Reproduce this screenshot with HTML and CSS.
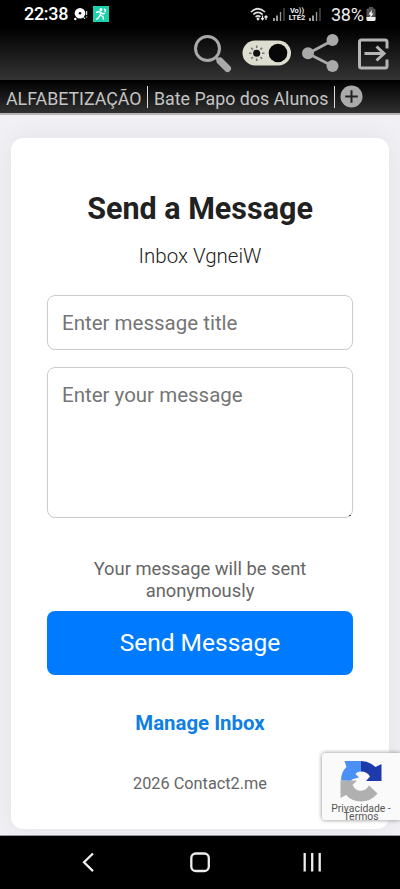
FILE: index.html
```html
<!DOCTYPE html>
<html lang="pt">
<head>
<meta charset="utf-8">
<meta name="viewport" content="width=device-width, initial-scale=1">
<title>Send a Message</title>
<link rel="stylesheet" href="styles.css">
</head>
<body>
<div class="status">
  <span class="clock">22:38</span>
  <svg class="disc" width="14" height="14" viewBox="0 0 14 14"><circle cx="6" cy="6.2" r="5.3" fill="#fff"/><circle cx="6" cy="6.2" r="1.3" fill="#111"/><circle cx="1.3" cy="12" r="1.2" fill="#fff"/><path d="M9.5 10l1.5 2M12.7 4v4M12.7 9.5v1" stroke="#fff" stroke-width="1"/></svg>
  <svg class="run" width="16" height="16" viewBox="0 0 16 16"><path d="M0 0h16v16H0z" fill="#1cd0ab"/><circle cx="8" cy="3.600" r="1.500" fill="#fff"/><path d="M3 6.500l3-1 2 1L7 9l3 1.700.500 3M7 9l-1.700 3L3 13.300M8 6.500l2 1.500 2-.8M11 3q2 1 1 3" fill="none" stroke="#fff" stroke-width="1.400"/></svg>
  <svg class="wifi" width="19" height="15" viewBox="0 0 19 15"><path d="M1 5Q8 -1.500 15 5M3.400 7.500Q8 3.300 12.600 7.500M5.600 9.800Q8 7.800 10.400 9.800" fill="none" stroke="#ddd" stroke-width="1.700"/><circle cx="8" cy="12" r="1.400" fill="#ddd"/><path d="M12.500 8.500v4M11.200 11.200l1.300 1.600 1.300-1.600M16 13V9M14.500 10.500l1.500-1.700 1.500 1.700" fill="none" stroke="#eee" stroke-width="1.200"/></svg>
  <svg class="signal" width="12" height="13" viewBox="0 0 12 13"><path d="M1 10v3M4 7.500v5.500" stroke="#eee" stroke-width="1.3"/><path d="M7.500 4v9" stroke="#999" stroke-width="1.300"/><path d="M11 0v13" stroke="#555" stroke-width="1.300"/></svg>
  <span class="lte"><span>Vo))</span><span>LTE2</span></span>
  <svg class="signal signal2" width="12" height="13" viewBox="0 0 12 13"><path d="M1 10v3M4 7.500v5.500" stroke="#eee" stroke-width="1.3"/><path d="M7.500 4v9" stroke="#999" stroke-width="1.300"/><path d="M11 0v13" stroke="#555" stroke-width="1.300"/></svg>
  <span class="pct">38%</span>
  <svg class="battery" width="10" height="14" viewBox="0 0 10 14"><path d="M3 0h4v1.500h1.500l1 1V13l-1 1h-7l-1-1V2.500l1-1H3z" fill="#555"/><path d="M.5 10h9v3l-1 1h-7l-1-1z" fill="#eee"/><path d="M6 3L2.500 7.500h2L4 11l3.500-4.500h-2z" fill="#fff"/></svg>
</div>
<div class="toolbar">
  <svg width="220" height="52" viewBox="180 28 220 52">
    <circle cx="207.500" cy="48.500" r="12" fill="none" stroke="#a9a9a9" stroke-width="3"/>
    <path d="M216 57.500l4 4" stroke="#a9a9a9" stroke-width="3"/><path d="M220 61l7.500 7.500" stroke="#a9a9a9" stroke-width="7" stroke-linecap="round"/>
    <rect x="242.500" y="40.500" width="48.500" height="25" rx="12.500" fill="#deded0"/><circle cx="278" cy="53" r="9.300" fill="#060606"/>
    <circle cx="256.700" cy="53.300" r="3.500" fill="#111"/><path d="M256.700 45.500v2.500M256.700 58.500v2.500M249 53.300h2.500M262 53.300h2.500M251.200 47.800l1.800 1.800M260.400 57l1.800 1.800M262.200 47.800l-1.800 1.800M253 57l-1.800 1.800" stroke="#777" stroke-width="1.600"/>
    <path d="M332.500 40.500L308 53.500l24.500 12.500" fill="none" stroke="#a9a9a9" stroke-width="2.800"/><circle cx="332.500" cy="40" r="6" fill="#a9a9a9"/><circle cx="308" cy="53.300" r="6" fill="#a9a9a9"/><circle cx="332.500" cy="66" r="6" fill="#a9a9a9"/>
    <path d="M387 48.500v-6.500a2 2 0 0 0-2-2h-23.500a2 2 0 0 0-2 2v24a2 2 0 0 0 2 2H385a2 2 0 0 0 2-2v-6.500M364.500 53.500h19M376.500 46.500l7.500 7-7.500 7" fill="none" stroke="#b5b5b5" stroke-width="3"/>
  </svg>
</div>
<div class="tabs">
  <span class="tab t1">ALFABETIZAÇÃO</span><i class="sep"></i><span class="tab t2">Bate Papo dos Alunos</span><i class="sep"></i>
  <svg width="23" height="23" viewBox="0 0 23 23"><circle cx="11.500" cy="11.500" r="11" fill="#aaa"/><path d="M11.500 5.200v12.600M5.200 11.500h12.600" stroke="#222" stroke-width="2"/></svg>
</div>
<main class="page">
  <section class="card">
    <h1>Send a Message</h1>
    <p class="inbox">Inbox VgneiW</p>
    <div class="field">Enter message title</div>
    <div class="field area">Enter your message</div>
    <p class="note">Your message will be sent anonymously</p>
    <div class="send">Send Message</div>
    <p class="manage">Manage Inbox</p>
    <p class="foot">2026 Contact2.me</p>
  </section>
  <aside class="captcha">
    <svg width="42" height="42" viewBox="0 0 42 42">
      <path d="M1 20.500Q1 12 6.500 7L4.500 1H21v10.500q-4 0-5.500 2.500l3.500 3.500-6 1.500-2.500 2z" fill="#4a90f5"/>
      <path d="M21 1q8 0 14.500 6L41.500 4v17H26l4-4.500q-3-5-9-5z" fill="#1c3aa9"/>
      <path d="M.5 20.500H17L12.500 25c3 7 11 7.500 15 2.500l1.500-2 8.500 8Q31 41.500 21 41.500 12 41.500 6 35L.5 38z" fill="#b0b0b0"/>
    </svg>
    <span class="terms">Privacidade -<br>Termos</span>
  </aside>
</main>
<nav class="nav">
  <svg width="400" height="53" viewBox="0 836 400 53" fill="none" stroke="#eee" stroke-width="2.300"><path d="M93 853.500l-9 8.800 9 8.800"/><rect x="191.300" y="853.500" width="17.500" height="17.500" rx="4.500"/><path d="M304.700 853v18.500M312.200 853v18.500M319.700 853v18.500"/></svg>
</nav>
</body>
</html>
```

FILE: styles.css
```css
* { box-sizing: border-box; }
body { margin: 0; width: 400px; height: 889px; overflow: hidden; background: #000; font-family: Roboto, "Liberation Sans", sans-serif; display: flex; flex-direction: column; }
svg { display: block; flex: none; }
p, h1 { margin: 0; }
.status { height: 28px; flex: none; display: flex; align-items: center; color: #eee; padding-left: 24px; background: #000; white-space: nowrap; }
.clock { width: 45px; font-size: 18px; line-height: 28px; font-weight: 500; letter-spacing: -.3px; color: #fff; }
.disc { margin-left: 5px; }
.run { margin-left: 5px; }
.wifi { margin-left: 141px; }
.signal { margin-left: 4px; }
.lte { width: 18px; margin-left: 3px; display: flex; flex-direction: column; align-items: center; font-size: 7.5px; line-height: 7px; font-weight: 700; }
.signal2 { margin-left: 3px; }
.pct { width: 33px; margin-left: 10px; font-size: 18px; font-weight: 400; letter-spacing: -.3px; }
.battery { margin-left: 2px; }
.toolbar { height: 52px; flex: none; display: flex; justify-content: flex-end; background: linear-gradient(#000, #343434); }
.tabs { height: 33px; flex: none; display: flex; align-items: center; background: linear-gradient(#000, #303030); color: #c4c4c4; font-size: 17.8px; padding: 1px 0 0 6px; white-space: nowrap; }
.tab { line-height: 30px; padding-top: 3px; }
.t1 { width: 141px; }
.t2 { width: 180px; }
.sep { width: 1px; height: 22px; margin: -1px 0 0; background: #ddd; }
.sep + .t2 { margin-left: 6px; }
.tabs svg { margin: -2px 0 0 5px; }
.page { height: 723px; flex: none; position: relative; padding: 23px 11px 0; border-top: 2px solid #b8b5b4; border-bottom: 1px solid #999; background: #f1f0f5; }
.card { height: 691px; border-radius: 12px; background: #fff; padding: 53px 36px 0; text-align: center; box-shadow: 0 0 24px rgba(0,0,0,.07); }
h1 { font-size: 30.5px; line-height: 36px; font-weight: 700; color: #212121; }
.inbox { margin-top: 17px; font-size: 20.5px; line-height: 24px; font-weight: 300; color: #222; }
.field { height: 55px; margin-top: 27px; border: 1px solid #ccc; border-radius: 8px; padding: 15px 14px 13px; font-size: 20.5px; line-height: 24px; color: #757575; text-align: left; }
.area { position: relative; height: 151px; margin-top: 17px; }
.area::after { content: ""; position: absolute; right: 1px; bottom: 1px; width: 2px; height: 1px; background: #555; }
.note { margin: 40px 30px 0; font-size: 18.35px; line-height: 22px; color: #666; }
.send { height: 64px; margin-top: 9px; border-radius: 8px; background: #007bff; color: #fff; font-size: 24.5px; line-height: 64px; }
.manage { margin-top: 36px; font-size: 20.4px; line-height: 24px; font-weight: 700; color: #0f7fe5; }
.foot { margin-top: 39px; font-size: 16.3px; line-height: 20px; color: #666; }
.captcha { position: absolute; right: 0; top: 638px; width: 78px; height: 67px; background: #fafafa; border-radius: 3px 0 0 3px; box-shadow: 0 0 4px #888; padding-top: 7px; display: flex; flex-direction: column; align-items: center; }
.terms { margin-top: 3px; text-align: center; white-space: nowrap; font-size: 10.4px; line-height: 8px; color: #555; }
.nav { height: 53px; flex: none; background: #000; }
```
